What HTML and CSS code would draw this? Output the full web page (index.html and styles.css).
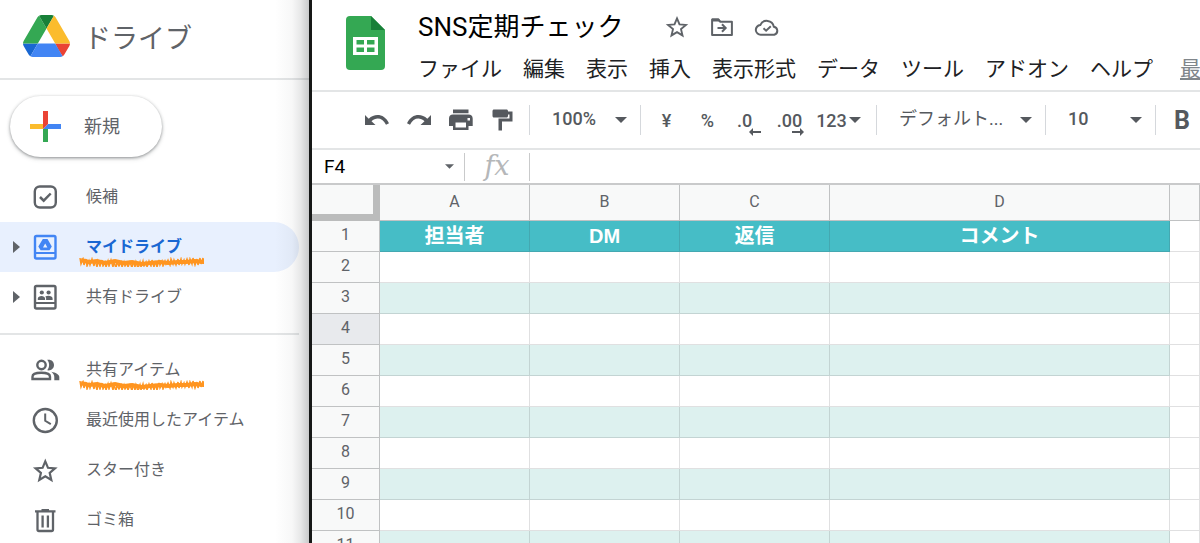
FILE: index.html
```html
<!DOCTYPE html>
<html lang="ja">
<head>
<meta charset="utf-8">
<title>SNS定期チェック</title>
<link rel="stylesheet" href="styles.css">
</head>
<body>
<svg class="symbols" aria-hidden="true">
  <symbol id="scribble" viewBox="0 0 125 10" preserveAspectRatio="none">
    <path d="M2 3l8 2 8-1 8 2 10-2 9 2 8-1 10 2 8-1 10-1 8 1 10-1 8 0 9-1 8 1 9-1" fill="none" stroke="currentColor" stroke-width="4"/>
    <path d="M1 1l1 6 2-5 1 6 2-6 1 7 2-5 1 4 2-6 2 7 1-6 2 7 1-6 2 5 2-6 1 6 2-4 1 5 2-6 1 5 2-6 2 7 1-5 2 6 1-6 2 4 2-4 1 5 2-5 1 4 2-3 1 4 2-5 2 6 1-7 2 6 1-5 2 6 2-6 1 5 2-6 1 5 2-4 1 5 2-6 2 5 1-6 2 7 1-6 2 6 2-7 1 5 2-4 1 5 2-5 1 3 2-4 2 5 1-6 2 5 1-4 2 5 2-6 1 6 2-6 1 5 2-4 1 4 2-5 2 6 1-6 2 5 1-6 2 7 2-6 1 6 2-7 1 6 2-6 1 6 1-6" fill="none" stroke="currentColor" stroke-width="1.500"/>
  </symbol>
</svg>
<div class="app">
  <aside class="sidebar">
    <header class="brand">
      <svg class="brand-logo" viewBox="0 0 87.3 78" aria-hidden="true">
        <path fill="#1967d2" d="m6.6 66.85 3.85 6.65c.8 1.4 1.95 2.5 3.3 3.3l13.75-23.8H0c0 1.55.4 3.1 1.2 4.5z"/>
        <path fill="#34a853" d="M43.65 25 29.9 1.2c-1.35.8-2.5 1.9-3.3 3.3L1.2 48.5C.4 49.9 0 51.45 0 53h27.5z"/>
        <path fill="#ea4335" d="M73.55 76.8c1.35-.8 2.5-1.9 3.3-3.3l1.6-2.75 7.65-13.25c.8-1.4 1.2-2.95 1.2-4.5H59.8l5.85 11.5z"/>
        <path fill="#188038" d="M43.65 25 57.4 1.2C56.05.4 54.5 0 52.9 0H34.4c-1.6 0-3.15.45-4.5 1.2z"/>
        <path fill="#4285f4" d="M59.8 53H27.5L13.75 76.8c1.35.8 2.9 1.2 4.5 1.2h50.8c1.6 0 3.15-.45 4.5-1.2z"/>
        <path fill="#fbbc2d" d="m73.4 26.5-12.7-22c-.8-1.4-1.95-2.5-3.3-3.3L43.65 25 59.8 53h27.45c0-1.55-.4-3.1-1.2-4.5z"/>
      </svg>
      <span class="brand-name">ドライブ</span>
    </header>
    <button class="new-button" type="button">
      <svg class="new-icon" viewBox="0 0 31 31" aria-hidden="true">
        <path fill="#fbbc2d" d="M0 13h13v5H0z"/>
        <path fill="#4285f4" d="M18 13h13v5H13z"/>
        <path fill="#34a853" d="M13 18h5v13h-5z"/>
        <path fill="#ea4335" d="M13 0h5v13l-5 5z"/>
      </svg>
      <span>新規</span>
    </button>
    <nav>
      <ul class="nav-list">
        <li><a class="nav-item" href="#">
          <svg class="nav-icon" viewBox="0 0 30 30" aria-hidden="true"><rect x="4.800" y="4.500" width="21" height="21" rx="5" fill="none" stroke="currentColor" stroke-width="2.400"/><path d="m10 15 3.700 3.700 7-7.200" fill="none" stroke="currentColor" stroke-width="2.500"/></svg>
          <span class="nav-label">候補</span></a></li>
        <li><a class="nav-item nav-item-active" href="#">
          <svg class="nav-arrow" viewBox="0 0 7 12" aria-hidden="true"><path d="M0 0l7 6-7 6z" fill="currentColor"/></svg>
          <svg class="nav-icon" viewBox="0 0 30 30" aria-hidden="true"><rect x="5" y="4" width="20.500" height="22.500" rx="1.500" fill="none" stroke="currentColor" stroke-width="2.400"/><path d="M4 21h22" stroke="currentColor" stroke-width="2"/><path fill="currentColor" fill-rule="evenodd" d="M12.800 7h4.700l4.300 7.400-2.300 3.900h-8.900l-2.300-3.900zM15.200 11.400l-2.200 4h4.400z"/></svg>
          <span class="nav-label">マイドライブ
            <svg class="scribble" aria-hidden="true"><use href="#scribble"/></svg>
          </span></a></li>
        <li><a class="nav-item" href="#">
          <svg class="nav-arrow" viewBox="0 0 7 12" aria-hidden="true"><path d="M0 0l7 6-7 6z" fill="currentColor"/></svg>
          <svg class="nav-icon" viewBox="0 0 30 30" aria-hidden="true"><rect x="5" y="4" width="20.500" height="22.500" rx="1.500" fill="none" stroke="currentColor" stroke-width="2.400"/><path d="M4 21h22" stroke="currentColor" stroke-width="2"/><g fill="currentColor"><circle cx="11.800" cy="10.500" r="2.100"/><circle cx="18.600" cy="10.500" r="2.100"/><path d="M7.800 18v-1.500c0-3.500 7.300-3.500 7.300 0V18zM16.100 18v-2l-.8-1.500c2.500-1.200 7.300-.8 7.300 2V18z"/></g></svg>
          <span class="nav-label">共有ドライブ</span></a></li>
      </ul>
      <ul class="nav-list nav-list-divided">
        <li><a class="nav-item" href="#">
          <svg class="nav-icon" viewBox="0 0 30 30" aria-hidden="true"><g fill="none" stroke="currentColor" stroke-width="2.400"><circle cx="11.500" cy="10" r="4.200"/><path d="M2.500 24v-2.300c0-5.200 17.500-5.200 17.500 0V24z"/></g><path fill="currentColor" d="M17.200 4.800c4-.7 6.800 1.700 6.800 5.200s-2.800 6-6.800 5.300c2.600-3.300 2.600-7.200 0-10.500zM21.300 16.800c4.300.9 8 2.600 8 5.200v3.200h-5V22c0-2-1.100-3.700-3-5.200z"/></svg>
          <span class="nav-label">共有アイテム
            <svg class="scribble" aria-hidden="true"><use href="#scribble"/></svg>
          </span></a></li>
        <li><a class="nav-item" href="#">
          <svg class="nav-icon" viewBox="0 0 30 30" aria-hidden="true"><circle cx="15.300" cy="15.500" r="11.500" fill="none" stroke="currentColor" stroke-width="2.400"/><path d="M15.200 8.500v7.300l5.600 3.300" fill="none" stroke="currentColor" stroke-width="2"/></svg>
          <span class="nav-label">最近使用したアイテム</span></a></li>
        <li><a class="nav-item" href="#">
          <svg class="nav-icon" viewBox="0 0 30 30" aria-hidden="true"><path d="M15.300 6.300l2.700 6.500 7 .6-5.300 4.600 1.600 6.900-6-3.600-6 3.600 1.600-6.900-5.300-4.600 7-.6z" fill="none" stroke="currentColor" stroke-width="2.200"/></svg>
          <span class="nav-label">スター付き</span></a></li>
        <li><a class="nav-item" href="#">
          <svg class="nav-icon" viewBox="0 0 30 30" aria-hidden="true"><path d="M7.500 7v17.500c0 1 .7 1.500 1.500 1.500h12.500c.8 0 1.500-.5 1.500-1.500V7" fill="none" stroke="currentColor" stroke-width="2.300"/><path fill="currentColor" d="M5 5.200h6.500V4h7.500v1.200h6.500v2.300H5z"/><path d="M12.600 10.500v12M17.900 10.500v12" stroke="currentColor" stroke-width="2.300"/></svg>
          <span class="nav-label">ゴミ箱</span></a></li>
      </ul>
    </nav>
  </aside>

  <main class="sheet">
    <header class="doc-header">
      <svg class="doc-logo" viewBox="0 0 39 54" aria-hidden="true">
        <path fill="#34a853" d="M4 0h21l14 14v36a4 4 0 0 1-4 4H4a4 4 0 0 1-4-4V4a4 4 0 0 1 4-4z"/>
        <path fill="#188038" d="M25 0l14 14H25z"/>
        <path fill="#fff" fill-rule="evenodd" d="M7 21h25v18H7zM10.500 24v4.500h7.500V24zM21 24v4.500h7.500V24zM10.500 31.500V36h7.500v-4.500zM21 31.500V36h7.500v-4.500z"/>
      </svg>
      <div class="doc-heading">
        <div class="title-row">
          <h1 class="doc-title">SNS定期チェック</h1>
          <button class="title-action" type="button" aria-label="スター">
            <svg viewBox="0 0 26 26" aria-hidden="true"><path d="M13 4.400l2.500 6 6.400.5-4.900 4.200 1.500 6.300-5.500-3.300-5.500 3.300 1.500-6.300-4.900-4.200 6.400-.5z" fill="none" stroke="currentColor" stroke-width="1.900"/></svg>
          </button>
          <button class="title-action" type="button" aria-label="移動">
            <svg viewBox="0 0 26 26" aria-hidden="true"><path d="M3.100 20.500V5.400h6l2.200 2.300h11.600v13.200H3.100z" fill="none" stroke="currentColor" stroke-width="2" stroke-linejoin="round"/><path d="M3 4.500h7l2 3H3z" fill="currentColor"/><path d="M8.500 14h7M13 10.200l3.700 3.800-3.700 3.800" fill="none" stroke="currentColor" stroke-width="2"/></svg>
          </button>
          <button class="title-action" type="button" aria-label="保存状況">
            <svg viewBox="0 0 26 26" aria-hidden="true"><path d="M7 20.700a4.800 4.800 0 0 1-.7-9.600 7.100 7.100 0 0 1 13.500 1.600 4.100 4.100 0 0 1 .5 8z" fill="none" stroke="currentColor" stroke-width="2"/><path d="M9.500 14.300l2.600 2.500 4.700-4.600" fill="none" stroke="currentColor" stroke-width="1.900"/></svg>
          </button>
        </div>
        <nav class="menus">
          <a href="#">ファイル</a><a href="#">編集</a><a href="#">表示</a><a href="#">挿入</a><a href="#">表示形式</a><a href="#">データ</a><a href="#">ツール</a><a href="#">アドオン</a><a href="#">ヘルプ</a><a class="last-edit" href="#">最</a>
        </nav>
      </div>
    </header>

    <div class="toolbar" role="toolbar" aria-label="書式">
      <div class="tool-group tool-group-icons">
        <button class="tool" type="button" aria-label="元に戻す"><svg viewBox="0 0 26 26" aria-hidden="true"><path fill="currentColor" d="M1 8l3.700 3.700C11 6 20.500 6.800 25 16.300l-3 1.500C18.500 10.500 12 10 7.500 14.300L11.500 18H1z"/></svg></button>
        <button class="tool" type="button" aria-label="やり直す"><svg viewBox="0 0 26 26" aria-hidden="true"><path fill="currentColor" d="M25 8l-3.700 3.700C15 6 5.500 6.800 1 16.300l3 1.500c3.500-7.300 10-7.800 14.500-3.500L14.500 18H25z"/></svg></button>
        <button class="tool" type="button" aria-label="印刷"><svg viewBox="0 0 26 26" aria-hidden="true"><path fill="currentColor" fill-rule="evenodd" d="M5 2.500h15.500v3.800H5zM5 7.500h15.500c2.500 0 4.200 1.500 4.200 4V19h-4.200v4H5v-4H1v-7.500c0-2.500 1.500-4 4-4zM7.500 15.500v5H18v-5zM19.500 11v2.500H22V11z"/></svg></button>
        <button class="tool" type="button" aria-label="書式を貼り付け"><svg viewBox="0 0 26 26" aria-hidden="true"><path fill="currentColor" d="M4 2.500h12.500c.8 0 1.500.7 1.500 1.500v.5h4.500v10H12v9H8.500v-12h11v-4H18V9c0 .8-.7 1.500-1.500 1.500H4c-.8 0-1.500-.7-1.500-1.500V4c0-.8.700-1.500 1.500-1.500z"/></svg></button>
      </div>
      <div class="tool-group">
        <label class="picker picker-zoom"><select aria-label="ズーム"><option>100%</option></select><svg class="caret" viewBox="0 0 12 6" aria-hidden="true"><path d="M0 0h12L6 6z"/></svg></label>
      </div>
      <div class="tool-group tool-group-formats">
        <button class="tool" type="button">¥</button>
        <button class="tool" type="button">%</button>
        <button class="tool tool-decimal" type="button" aria-label="小数点以下の桁数を減らす">.0<svg class="arrow" viewBox="0 0 12 8" aria-hidden="true"><path d="M0 4l4-4v3h8v2H4v3z"/></svg></button>
        <button class="tool tool-decimal" type="button" aria-label="小数点以下の桁数を増やす">.00<svg class="arrow" viewBox="0 0 12 8" aria-hidden="true"><path d="M12 4L8 0v3H0v2h8v3z"/></svg></button>
        <button class="tool tool-more" type="button">123<svg class="caret" viewBox="0 0 12 6" aria-hidden="true"><path d="M0 0h12L6 6z"/></svg></button>
      </div>
      <div class="tool-group">
        <label class="picker picker-font"><select aria-label="フォント"><option>デフォルト...</option></select><svg class="caret" viewBox="0 0 12 6" aria-hidden="true"><path d="M0 0h12L6 6z"/></svg></label>
      </div>
      <div class="tool-group">
        <label class="picker picker-size"><select aria-label="フォントサイズ"><option>10</option></select><svg class="caret" viewBox="0 0 12 6" aria-hidden="true"><path d="M0 0h12L6 6z"/></svg></label>
      </div>
      <div class="tool-group tool-group-style">
        <button class="tool tool-bold" type="button" aria-label="太字">B</button>
      </div>
    </div>

    <div class="formula-bar">
      <div class="name-box">
        <input class="name-input" type="text" value="F4" aria-label="名前ボックス">
        <button class="name-toggle" type="button" aria-label="名前付き範囲"><svg class="caret" viewBox="0 0 12 6" aria-hidden="true"><path d="M0 0h12L6 6z"/></svg></button>
      </div>
      <label class="fx" for="formula">fx</label>
      <input class="formula-input" id="formula" type="text">
    </div>

    <div class="grid-area">
      <table class="grid">
        <colgroup><col class="col-index"><col class="col-data"><col class="col-data"><col class="col-data"><col class="col-wide"><col></colgroup>
        <thead>
          <tr><th class="corner"></th><th>A</th><th>B</th><th>C</th><th>D</th><th></th></tr>
        </thead>
        <tbody>
          <tr class="titles"><th>1</th><td>担当者</td><td>DM</td><td>返信</td><td>コメント</td><td></td></tr>
          <tr><th>2</th><td></td><td></td><td></td><td></td><td></td></tr>
          <tr class="band"><th>3</th><td></td><td></td><td></td><td></td><td></td></tr>
          <tr class="current"><th>4</th><td></td><td></td><td></td><td></td><td></td></tr>
          <tr class="band"><th>5</th><td></td><td></td><td></td><td></td><td></td></tr>
          <tr><th>6</th><td></td><td></td><td></td><td></td><td></td></tr>
          <tr class="band"><th>7</th><td></td><td></td><td></td><td></td><td></td></tr>
          <tr><th>8</th><td></td><td></td><td></td><td></td><td></td></tr>
          <tr class="band"><th>9</th><td></td><td></td><td></td><td></td><td></td></tr>
          <tr><th>10</th><td></td><td></td><td></td><td></td><td></td></tr>
          <tr class="band"><th>11</th><td></td><td></td><td></td><td></td><td></td></tr>
        </tbody>
      </table>
    </div>
  </main>
</div>
</body>
</html>
```
FILE: styles.css
```css
* {
  box-sizing: border-box;
}

body {
  margin: 0;
  background: #fff;
  color: #5f6368;
  font-family: Roboto, "Noto Sans CJK JP", sans-serif;
  font-size: 16px;
}

a {
  color: inherit;
  text-decoration: none;
}

button,
input,
select {
  margin: 0;
  padding: 0;
  border: 0;
  background: none;
  color: inherit;
  font: inherit;
}

svg {
  display: block;
}

.symbols {
  display: none;
}

.app {
  display: flex;
  height: 100vh;
  overflow: hidden;
}

/* Drive sidebar */

.sidebar {
  position: relative;
  flex: 0 0 312px;
  border-right: 3px solid #161817;
}

.sidebar::after {
  content: "";
  position: absolute;
  top: 0;
  right: 0;
  bottom: 0;
  width: 34px;
  background: linear-gradient(to right, rgba(60, 64, 67, 0), rgba(60, 64, 67, 0.04) 50%, rgba(60, 64, 67, 0.12) 75%, rgba(60, 64, 67, 0.28));
  pointer-events: none;
}

.brand {
  display: flex;
  align-items: center;
  gap: 14px;
  height: 80px;
  padding: 0 0 6px 23px;
  border-bottom: 2px solid #e3e5e6;
}

.brand-logo {
  width: 47px;
  height: 42px;
}

.brand-name {
  padding-top: 5px;
  font-size: 27px;
  line-height: 40px;
}

.new-button {
  display: flex;
  align-items: center;
  gap: 23px;
  width: 152px;
  height: 61px;
  margin: 16px 0 15px 10px;
  padding-left: 20px;
  border-radius: 31px;
  background: #fff;
  box-shadow: 0 1px 3px rgba(60, 64, 67, 0.5), 0 2px 5px rgba(60, 64, 67, 0.14);
  font-size: 18px;
}

.new-button span {
  padding-bottom: 3px;
}

.new-icon {
  width: 31px;
  height: 31px;
}

.nav-list {
  margin: 0;
  padding: 0;
  list-style: none;
}

.nav-list-divided {
  margin: 11px 10px 0 0;
  padding-top: 10px;
  border-top: 2px solid #e3e5e6;
}

.nav-item {
  display: grid;
  grid-template-columns: 17px 30px 1fr;
  align-items: center;
  height: 50px;
  padding-left: 13px;
}

.nav-arrow {
  grid-column: 1;
  width: 7px;
  height: 12px;
}

.nav-icon {
  grid-column: 2;
  grid-row: 1;
  width: 30px;
  height: 30px;
}

.nav-label {
  position: relative;
  grid-column: 3;
  justify-self: start;
  margin-left: 26px;
  line-height: 24px;
  white-space: nowrap;
}

.nav-item-active {
  margin-right: 10px;
  border-radius: 0 25px 25px 0;
  background: #e8f0fe;
}

.nav-item-active .nav-icon {
  color: #4285f4;
}

.nav-item-active .nav-label {
  color: #1967d2;
  font-weight: 700;
}

.scribble {
  position: absolute;
  top: 22px;
  left: -7px;
  width: 125px;
  height: 10px;
  color: #ff9520;
}

/* Document header */

.sheet {
  display: flex;
  flex: 1;
  flex-direction: column;
  min-width: 0;
}

.doc-header {
  display: flex;
  gap: 33px;
  height: 92px;
  padding-left: 34px;
  border-bottom: 2px solid #e3e5e6;
  overflow: hidden;
}

.doc-logo {
  flex: none;
  width: 39px;
  height: 54px;
  margin-top: 16px;
}

.title-row {
  display: flex;
  align-items: center;
  height: 53px;
}

.doc-title {
  margin: 0 32px 0 0;
  color: #000;
  font-size: 26px;
  font-weight: 400;
  line-height: 40px;
}

.title-action {
  width: 45px;
  padding-left: 9px;
}

.title-action svg {
  width: 26px;
  height: 26px;
}

.menus {
  display: flex;
  gap: 21px;
  color: #202124;
  font-size: 21px;
  line-height: 32px;
  white-space: nowrap;
}

.menus .last-edit {
  margin-left: 6px;
  color: #80868b;
  text-decoration: underline;
}

/* Toolbar */

.toolbar {
  display: flex;
  align-items: center;
  height: 58px;
  padding-left: 44px;
  border-bottom: 2px solid #e3e5e6;
  overflow: hidden;
  color: #55595e;
  font-size: 18px;
  font-weight: 500;
}

.tool-group {
  display: flex;
  flex: none;
  align-items: center;
  height: 30px;
  border-right: 1px solid #d5d8dc;
}

.tool-group-icons {
  padding-right: 5px;
}

.tool-group-formats {
  padding: 0 5px;
}

.tool-group-style {
  padding-left: 5px;
}

.tool {
  display: flex;
  align-items: center;
  justify-content: center;
  width: 41px;
  height: 30px;
}

.tool-group-icons .tool {
  width: 42px;
}

.tool-group-icons svg {
  width: 26px;
  height: 26px;
}

.tool-decimal {
  position: relative;
  padding-right: 8px;
}

.tool-decimal + .tool-decimal {
  padding-right: 0;
}

.arrow {
  position: absolute;
  right: 8px;
  bottom: -1px;
  width: 12px;
  height: 8px;
  fill: currentColor;
}

.tool-decimal + .tool-decimal .arrow {
  right: 6px;
}

.tool-more {
  gap: 2px;
  width: 61px;
  padding-right: 4px;
}

.tool-bold {
  width: 42px;
  font-size: 25px;
  font-weight: 700;
}

.caret {
  width: 12px;
  height: 6px;
  fill: currentColor;
}

.picker {
  display: grid;
  align-items: center;
  height: 30px;
}

.picker select {
  grid-area: 1 / 1;
  width: 100%;
  height: 30px;
  padding: 0 0 3px 22px;
  appearance: none;
}

.picker .caret {
  grid-area: 1 / 1;
  justify-self: end;
  margin-right: 13px;
  pointer-events: none;
}

.picker-zoom {
  width: 110px;
}

.picker-font {
  width: 168px;
  font-weight: 400;
}

.picker-size {
  width: 109px;
}

/* Formula bar */

.formula-bar {
  display: flex;
  align-items: center;
  height: 35px;
  border-bottom: 2px solid #c9cacb;
}

.name-box {
  display: flex;
  align-items: center;
  width: 153px;
  height: 28px;
  padding: 0 10px 0 12px;
  border-right: 1px solid #c9cacb;
}

.name-input {
  flex: 1;
  min-width: 0;
  color: #000;
  font-size: 19px;
}

.name-toggle .caret {
  width: 9px;
  height: 5px;
}

.fx {
  width: 65px;
  height: 28px;
  border-right: 1px solid #c9cacb;
  color: #b5b7b9;
  font-family: "DejaVu Serif", serif;
  font-size: 27px;
  font-style: italic;
  line-height: 25px;
  text-align: center;
}

.formula-input {
  flex: 1;
  min-width: 0;
  height: 28px;
  padding: 0 8px;
  font-size: 19px;
}

/* Cell grid */

.grid-area {
  flex: 1;
  min-height: 0;
  overflow: hidden;
}

.grid {
  width: 100%;
  border-spacing: 0;
  table-layout: fixed;
}

.col-index {
  width: 68px;
}

.col-data {
  width: 150px;
}

.col-wide {
  width: 340px;
}

.grid th,
.grid td {
  height: 31px;
  padding: 0;
  border: solid #c0c2c3;
  border-width: 0 1px 1px 0;
  line-height: 24px;
  text-align: center;
}

.grid th {
  padding-bottom: 2px;
  background: #f8f9f9;
  font-size: 16px;
  font-weight: 400;
}

.grid thead th {
  height: 36px;
}

.grid thead .corner {
  border: solid #bbbcbc;
  border-width: 0 7px 7px 0;
}

.grid td {
  border-color: rgba(60, 64, 67, 0.16);
}

.grid .titles td:not(:last-child) {
  background: #46bdc6;
  color: #fff;
  font-family: "Liberation Sans", "Noto Sans CJK JP", sans-serif;
  font-size: 20px;
  font-weight: 700;
}

.grid .band td:not(:last-child) {
  background: #ddf1ef;
}

.grid .current th {
  background: #e8eaed;
}
```
